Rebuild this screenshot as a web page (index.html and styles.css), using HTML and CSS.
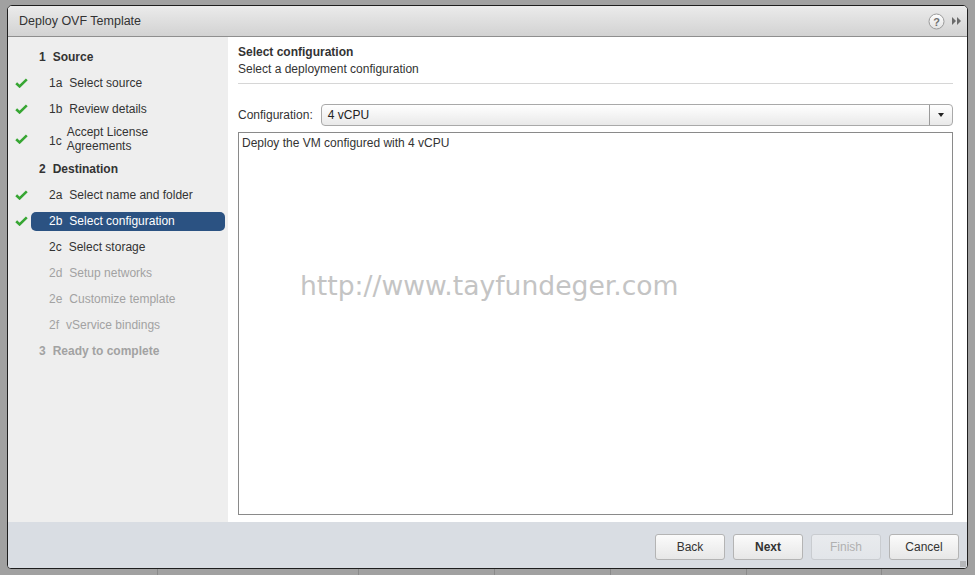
FILE: index.html
```html
<!DOCTYPE html>
<html lang="en">
<head>
    <meta charset="UTF-8">
    <title>Deploy OVF Template</title>
    <link rel="stylesheet" href="styles.css">
</head>
<body>
    <div class="backdrop">
        <div class="dialog">
            <div class="titlebar">
                <span class="title">Deploy OVF Template</span>
                <div class="tools">
                    <svg class="help" width="17" height="17" viewBox="0 0 17 17">
                        <defs>
                            <linearGradient id="hg" x1="0" y1="0" x2="0" y2="1">
                                <stop offset="0" stop-color="#ffffff"/>
                                <stop offset="1" stop-color="#e2e2e2"/>
                            </linearGradient>
                        </defs>
                        <circle cx="8.5" cy="8.5" r="7.5" fill="url(#hg)" stroke="#9a9a9a"/>
                        <text x="8.5" y="12.6" text-anchor="middle" font-family="Liberation Sans, Arial, sans-serif" font-size="11" font-weight="bold" fill="#707070">?</text>
                    </svg>
                    <svg class="collapse" width="11" height="10" viewBox="0 0 11 10">
                        <path d="M1 1 L5 5 L1 9 Z M6 1 L10 5 L6 9 Z" fill="#6b6b6b"/>
                    </svg>
                </div>
            </div>

            <div class="main">
                <nav class="steps">
                    <div class="step head"><span class="check"></span><span class="label"><span class="num">1</span>Source</span></div>
                    <div class="step done"><span class="check"></span><span class="label"><span class="num">1a</span>Select source</span></div>
                    <div class="step done"><span class="check"></span><span class="label"><span class="num">1b</span>Review details</span></div>
                    <div class="step done tall"><span class="check"></span><span class="label"><span class="num">1c</span><span class="wrap">Accept License<br>Agreements</span></span></div>
                    <div class="step head"><span class="check"></span><span class="label"><span class="num">2</span>Destination</span></div>
                    <div class="step done"><span class="check"></span><span class="label"><span class="num">2a</span>Select name and folder</span></div>
                    <div class="step done active"><span class="check"></span><span class="label"><span class="num">2b</span>Select configuration</span></div>
                    <div class="step"><span class="check"></span><span class="label"><span class="num">2c</span>Select storage</span></div>
                    <div class="step off"><span class="check"></span><span class="label"><span class="num">2d</span>Setup networks</span></div>
                    <div class="step off"><span class="check"></span><span class="label"><span class="num">2e</span>Customize template</span></div>
                    <div class="step off"><span class="check"></span><span class="label"><span class="num">2f</span>vService bindings</span></div>
                    <div class="step head off"><span class="check"></span><span class="label"><span class="num">3</span>Ready to complete</span></div>
                </nav>

                <section class="content">
                    <div class="page-head">
                        <div class="page-title">Select configuration</div>
                        <div class="page-sub">Select a deployment configuration</div>
                    </div>
                    <div class="config-row">
                        <span class="config-label">Configuration:</span>
                        <div class="select">
                            <span class="select-value">4 vCPU</span>
                            <span class="select-arrow"></span>
                        </div>
                    </div>
                    <div class="description">Deploy the VM configured with 4 vCPU</div>
                    <div class="watermark">http://www.tayfundeger.com</div>
                </section>
            </div>

            <div class="footer">
                <button class="btn">Back</button>
                <button class="btn primary">Next</button>
                <button class="btn" disabled>Finish</button>
                <button class="btn">Cancel</button>
                <span class="grip"></span>
            </div>
        </div>
        <div class="underlay">
            <span></span><span></span><span></span><span></span><span></span><span></span>
        </div>
    </div>
</body>
</html>
```

FILE: styles.css
```css
html, body {
    margin: 0;
    height: 100%;
}
body {
    background-color: #a1a1a1;
    font-family: "Liberation Sans", Arial, sans-serif;
    font-size: 12px;
    color: #333;
    overflow: hidden;
}
.backdrop {
    padding: 5px 0 0 7px;
}

.dialog {
    width: 959px;
    height: 562px;
    border: 1px solid #1e1e1e;
    border-radius: 5px 5px 4px 4px;
    background-color: #fff;
    display: flex;
    flex-direction: column;
    overflow: hidden;
    position: relative;
}

.titlebar {
    height: 30px;
    flex: none;
    border-bottom: 1px solid #8e8e8e;
    background: linear-gradient(#ebebeb, #d2d2d2);
    display: flex;
    align-items: center;
    padding: 0 5px 0 11px;
}
.title {
    flex: 1;
    font-size: 12.5px;
    color: #333;
}
.tools {
    display: flex;
    align-items: center;
    gap: 6px;
}

.main {
    flex: 1;
    display: flex;
    min-height: 0;
}

.steps {
    width: 220px;
    flex: none;
    background-color: #eeeeee;
    padding-top: 7px;
}
.step {
    display: flex;
    align-items: center;
    height: 26px;
}
.step.tall {
    height: 34px;
}
.check {
    width: 17px;
    height: 10px;
    margin-left: 6px;
}
.step.done .check {
    background-image: url("data:image/svg+xml,%3Csvg xmlns='http://www.w3.org/2000/svg' width='13' height='10' viewBox='0 0 13 10'%3E%3Cpath d='M1.2 5.2 L4.6 8.4 L11.8 1.4' fill='none' stroke='%2337a633' stroke-width='2.6'/%3E%3C/svg%3E");
    background-repeat: no-repeat;
    background-position: 1px 0;
}
.label {
    flex: 1;
    margin-right: 3px;
    height: 19px;
    border-radius: 5px;
    padding-left: 18px;
    display: flex;
    align-items: center;
    white-space: nowrap;
}
.step.tall .label {
    height: 30px;
}
.num {
    margin-right: 7px;
}
.step.tall .num {
    margin-right: 5px;
    padding-top: 3px;
}
.wrap {
    line-height: 14px;
}
.step.head .label {
    padding-left: 8px;
    font-weight: bold;
}
.step.off {
    color: #a2a2a2;
}
.step.active .label {
    background-color: #2b5282;
    color: #fff;
}

.content {
    flex: 1;
    padding: 7px 14px 7px 10px;
    display: flex;
    flex-direction: column;
    position: relative;
}
.page-head {
    border-bottom: 1px solid #d6d6d6;
    padding-bottom: 4px;
}
.page-title {
    font-weight: bold;
    line-height: 16px;
}
.page-sub {
    line-height: 19px;
}
.config-row {
    display: flex;
    align-items: center;
    margin-top: 20px;
    height: 22px;
}
.config-label {
    margin-right: 8px;
}
.select {
    flex: 1;
    height: 20px;
    border: 1px solid #a9a9a9;
    border-radius: 4px;
    background: linear-gradient(#ffffff, #e9e9e9);
    display: flex;
    align-items: center;
}
.select-value {
    flex: 1;
    padding-left: 6px;
    color: #222;
}
.select-arrow {
    width: 22px;
    height: 20px;
    border-left: 1px solid #9a9a9a;
    position: relative;
}
.select-arrow::after {
    content: "";
    position: absolute;
    left: 8px;
    top: 8px;
    border-left: 3.5px solid transparent;
    border-right: 3.5px solid transparent;
    border-top: 4px solid #222;
}
.description {
    flex: 1;
    margin-top: 6px;
    border: 1px solid #8a8a8a;
    padding: 3px;
    color: #333;
}
.watermark {
    position: absolute;
    left: 72px;
    top: 233px;
    width: 378px;
    overflow: hidden;
    white-space: nowrap;
    font-family: "DejaVu Sans", Verdana, sans-serif;
    font-size: 26.6px;
    color: #c4c4c4;
}

.footer {
    height: 46px;
    flex: none;
    background-color: #d9dde3;
    display: flex;
    justify-content: flex-end;
    align-items: flex-start;
    gap: 8px;
    padding: 12px 8px 0 0;
    box-sizing: border-box;
    position: relative;
}
.btn {
    width: 70px;
    height: 26px;
    border: 1px solid #b4b4b4;
    border-radius: 3px;
    background: linear-gradient(#fbfbfb, #e7e7e7);
    font-family: "Liberation Sans", Arial, sans-serif;
    font-size: 12px;
    color: #333;
    padding: 0;
}
.btn.primary {
    font-weight: bold;
}
.btn:disabled {
    color: #b0b0b0;
    border-color: #c9ccd0;
    background: linear-gradient(#e9ebee, #e2e5e9);
}
.grip {
    position: absolute;
    right: 1px;
    bottom: 1px;
    width: 6px;
    height: 6px;
    background-image: radial-gradient(#8a8a8a 0.6px, transparent 0.8px);
    background-size: 2px 2px;
}

.underlay {
    display: flex;
    height: 8px;
}
.underlay span {
    width: 1px;
    background-color: #8a8a8a;
}
.underlay span:nth-child(1) { margin-left: 150px; }
.underlay span:nth-child(2) { margin-left: 200px; }
.underlay span:nth-child(3) { margin-left: 135px; }
.underlay span:nth-child(4) { margin-left: 115px; }
.underlay span:nth-child(5) { margin-left: 135px; }
.underlay span:nth-child(6) { margin-left: 134px; }
```
